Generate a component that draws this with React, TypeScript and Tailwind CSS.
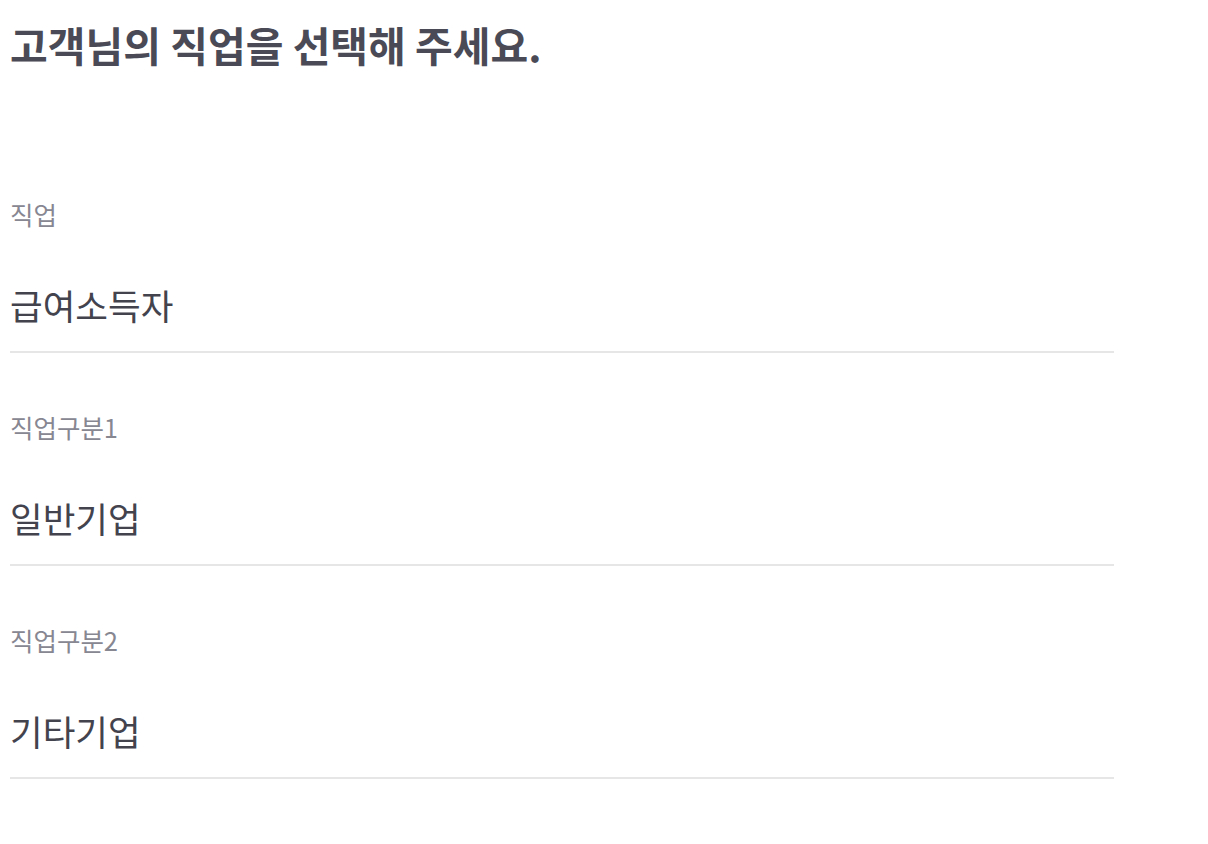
import React from 'react';

const fields = [
  { label: '직업', value: '급여소득자' },
  { label: '직업구분1', value: '일반기업' },
  { label: '직업구분2', value: '기타기업' },
];

const App: React.FC = () => {
  return (
    <div className="min-h-screen bg-white pl-[10px] pt-[20px] font-['Noto_Sans_CJK_KR',sans-serif]">
      <h1 className="text-[41px] leading-[48px] font-bold text-[#4a4a56]">
        고객님의 직업을 선택해 주세요.
      </h1>

      <div className="w-[1104px] mt-[128px] flex flex-col gap-[56px]">
        {fields.map((f) => (
          <div key={f.label} className="flex flex-col">
            <div className="text-[25.5px] leading-[36px] text-[#878792]">{f.label}</div>
            <div className="mt-[49px] pb-[22px] border-b-2 border-[#e6e6e6] text-[35.5px] leading-[48px] text-[#43434e]">
              {f.value}
            </div>
          </div>
        ))}
      </div>
    </div>
  );
};

export default App;
